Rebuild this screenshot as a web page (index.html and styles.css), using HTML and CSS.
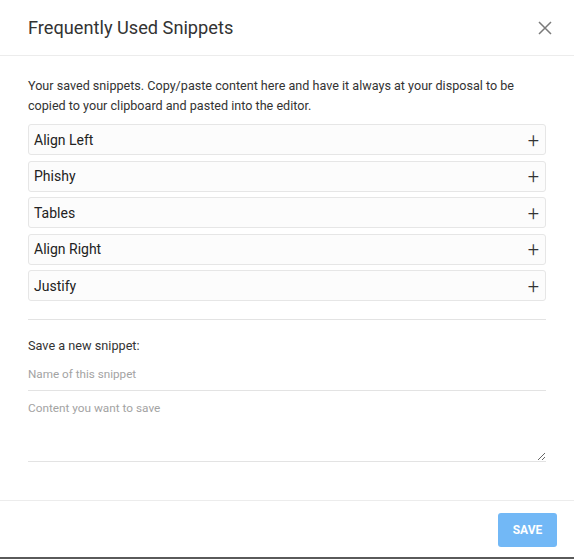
FILE: index.html
```html
<!DOCTYPE html>
<html>
<head>
<meta charset="utf-8">
<link rel="stylesheet" href="styles.css">
</head>
<body>
<div class="modal">
  <header class="modal-header">
    <h1 class="title">Frequently Used Snippets</h1>
    <button class="close" aria-label="Close">
      <svg width="14" height="14" viewBox="0 0 14 14"><path d="M1 1L13 13M13 1L1 13" stroke="#7a7a7a" stroke-width="1.5" fill="none"/></svg>
    </button>
  </header>
  <main class="modal-body">
    <p class="desc">Your saved snippets. Copy/paste content here and have it always at your disposal to be copied to your clipboard and pasted into the editor.</p>
    <ul class="snippets">
      <li class="snippet"><span>Align Left</span><span class="plus">+</span></li>
      <li class="snippet"><span>Phishy</span><span class="plus">+</span></li>
      <li class="snippet"><span>Tables</span><span class="plus">+</span></li>
      <li class="snippet"><span>Align Right</span><span class="plus">+</span></li>
      <li class="snippet"><span>Justify</span><span class="plus">+</span></li>
    </ul>
    <hr class="sep">
    <div class="new">
      <label class="new-label">Save a new snippet:</label>
      <input class="name-input" type="text" placeholder="Name of this snippet">
      <textarea class="content-input" placeholder="Content you want to save"></textarea>
    </div>
  </main>
  <footer class="modal-footer">
    <button class="save">SAVE</button>
  </footer>
</div>
</body>
</html>
```
FILE: styles.css
```css
* { box-sizing: border-box; }
html, body { margin: 0; padding: 0; background: #fff; }
body {
  font-family: Roboto, "Liberation Sans", sans-serif;
  color: #333;
}
.modal {
  height: 559px;
  display: flex;
  flex-direction: column;
  border-bottom: 2px solid #5a5a5a;
}
.modal-header {
  height: 56px;
  display: flex;
  align-items: center;
  justify-content: space-between;
  padding: 0 21px 0 28px;
  border-bottom: 1px solid #ececec;
}
.title {
  margin: 0;
  font-size: 18.2px;
  font-weight: 400;
  color: #333;
}
.close {
  background: none;
  border: 0;
  padding: 0;
  width: 16px;
  height: 16px;
  display: flex;
  align-items: center;
  justify-content: center;
}
.modal-body {
  flex: 1;
  padding: 20px 28px 0 28px;
}
.desc {
  margin: 0 0 8px 0;
  font-size: 12.6px;
  line-height: 20px;
  color: #333;
}
.snippets {
  list-style: none;
  margin: 0;
  padding: 0;
  display: flex;
  flex-direction: column;
  gap: 5.5px;
}
.snippet {
  height: 31px;
  border: 1px solid #e6e6e6;
  border-radius: 3px;
  background: #fcfcfc;
  display: flex;
  align-items: center;
  justify-content: space-between;
  padding: 0 6px 0 5px;
  font-size: 14px;
  color: #222;
}
.plus {
  font-size: 20px;
  font-weight: 300;
  line-height: 1;
  color: #333;
}
.sep {
  border: 0;
  border-top: 1px solid #e3e3e3;
  margin: 18px 0 0 0;
}
.new {
  display: flex;
  flex-direction: column;
  padding-top: 19px;
}
.new-label {
  font-size: 12.7px;
  color: #333;
  line-height: 14px;
}
.name-input {
  border: 0;
  border-bottom: 1px solid #e3e3e3;
  outline: none;
  padding: 0;
  margin-top: 5px;
  height: 33px;
  font-family: inherit;
  font-size: 11.7px;
  color: #333;
}
.content-input {
  border: 0;
  border-bottom: 1px solid #e3e3e3;
  outline: none;
  padding: 10px 0 0 0;
  height: 71px;
  font-family: inherit;
  font-size: 11.8px;
  color: #333;
  resize: vertical;
}
.name-input::placeholder, .content-input::placeholder { color: #a3a3a3; }
.modal-footer {
  height: 57px;
  border-top: 1px solid #ececec;
  display: flex;
  align-items: flex-start;
  justify-content: flex-end;
  padding: 12px 17px 0 0;
}
.save {
  width: 59px;
  height: 34px;
  border: 0;
  border-radius: 3px;
  background: #72b8f6;
  color: #fff;
  font-family: inherit;
  font-weight: 700;
  font-size: 12px;
}
```
